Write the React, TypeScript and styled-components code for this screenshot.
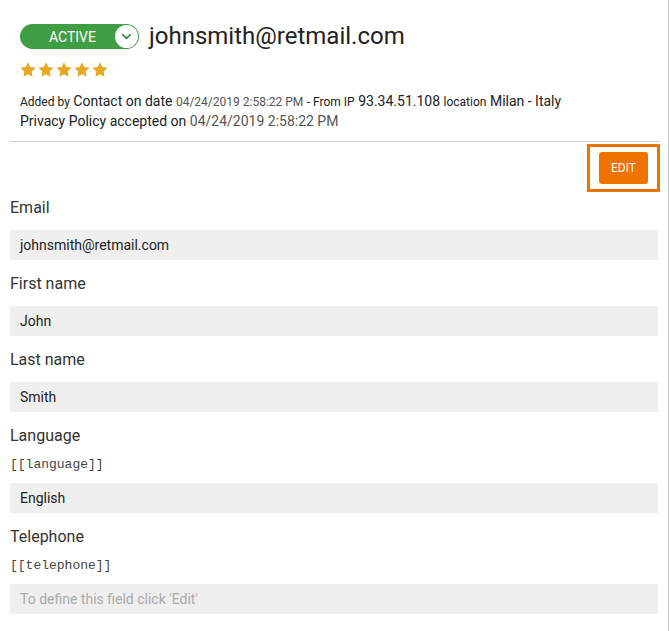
import { type FC } from "react";
import styled, { createGlobalStyle } from "styled-components";
import { ChevronDown } from "lucide-react";

const GlobalStyle = createGlobalStyle`
  html, body {
    margin: 0;
    padding: 0;
    background: #ffffff;
  }
  body {
    font-family: Roboto, "Liberation Sans", Arial, sans-serif;
    color: #222;
  }
`;

const StyledPage = styled.div`
  box-sizing: border-box;
  width: 669px;
  min-height: 631px;
  padding: 0 10px 20px 10px;
  border-right: 1px solid #cccccc;
`;

const StyledHeader = styled.div`
  padding: 24px 0 0 10px;
`;

const StyledTitleRow = styled.div`
  display: flex;
  align-items: center;
  gap: 10px;
`;

const StyledBadge = styled.div`
  box-sizing: border-box;
  display: flex;
  align-items: center;
  justify-content: space-between;
  width: 119px;
  height: 25px;
  padding: 0 1px 0 0;
  border-radius: 13px;
  background: #3f9e44;
  color: #ffffff;
  font-size: 14px;
  text-transform: uppercase;

  & > span {
    flex: 1;
    text-align: center;
    padding-left: 10px;
  }
`;

const StyledBadgeKnob = styled.div`
  display: flex;
  align-items: center;
  justify-content: center;
  width: 23px;
  height: 23px;
  border-radius: 50%;
  background: #ffffff;
  color: #2e8a33;
`;

const StyledTitle = styled.h1`
  margin: 0;
  font-size: 24px;
  font-weight: 400;
  line-height: 25px;
  color: #222;
`;

const StyledStars = styled.div`
  display: flex;
  gap: 2px;
  margin-top: 13px;
`;

const StyledMeta = styled.div`
  margin-top: 14px;
  font-size: 14px;
  line-height: 20px;
  color: #222;
`;

const StyledSmall = styled.span<{ $muted?: boolean }>`
  font-size: 12px;
  line-height: 1;
  color: ${({ $muted }) => ($muted ? "#555" : "#222")};
`;

const StyledMuted = styled.span`
  color: #555;
`;

const StyledDivider = styled.hr`
  margin: 10px -2px 0 0;
  border: 0;
  border-top: 1px solid #cccccc;
`;

const StyledToolbar = styled.div`
  display: flex;
  justify-content: flex-end;
  margin: 2px -2px 0 0;
`;

const StyledHighlight = styled.div`
  padding: 5px 9px;
  border: 3px solid #f07300;
`;

const StyledEditButton = styled.button`
  width: 49px;
  height: 32px;
  border: 0;
  border-radius: 3px;
  background: #f07300;
  color: #ffffff;
  font-family: inherit;
  font-size: 12px;
  cursor: pointer;
`;

const StyledField = styled.div<{ $first?: boolean }>`
  margin-top: ${({ $first }) => ($first ? "6px" : "14px")};
`;

const StyledLabel = styled.div`
  font-size: 16px;
  line-height: 20px;
  color: #333;
  margin-bottom: 12px;
`;

const StyledHint = styled.div`
  margin: -2px 0 10px;
  font-family: "Liberation Mono", "Courier New", monospace;
  font-size: 13px;
  line-height: 17px;
  color: #444;
`;

const StyledValue = styled.div<{ $placeholder?: boolean }>`
  box-sizing: border-box;
  height: 30px;
  padding: 0 10px;
  display: flex;
  align-items: center;
  background: #efefef;
  font-size: 14px;
  color: ${({ $placeholder }) => ($placeholder ? "#aaaaaa" : "#222")};
`;

const Star: FC = () => (
  <svg width="16" height="15" viewBox="0 0 24 23" aria-hidden>
    <path
      d="M12 0.5l3.5 7.3 8 1.1-5.8 5.6 1.4 8L12 18.7l-7.1 3.8 1.4-8L0.5 8.9l8-1.1z"
      fill="#e6a822"
    />
  </svg>
);

interface FieldData {
  label: string;
  hint?: string;
  value?: string;
}

const fields: FieldData[] = [
  { label: "Email", value: "johnsmith@retmail.com" },
  { label: "First name", value: "John" },
  { label: "Last name", value: "Smith" },
  { label: "Language", hint: "[[language]]", value: "English" },
  { label: "Telephone", hint: "[[telephone]]" },
];

const App: FC = () => (
  <>
    <GlobalStyle />
    <StyledPage>
      <StyledHeader>
        <StyledTitleRow>
          <StyledBadge>
            <span>Active</span>
            <StyledBadgeKnob>
              <ChevronDown size={15} strokeWidth={2.5} />
            </StyledBadgeKnob>
          </StyledBadge>
          <StyledTitle>johnsmith@retmail.com</StyledTitle>
        </StyledTitleRow>
        <StyledStars>
          {[0, 1, 2, 3, 4].map((i) => (
            <Star key={i} />
          ))}
        </StyledStars>
        <StyledMeta>
          <div>
            <StyledSmall>Added by</StyledSmall> Contact on date{" "}
            <StyledSmall $muted>04/24/2019 2:58:22 PM</StyledSmall>{" "}
            <StyledSmall>- From IP</StyledSmall> 93.34.51.108{" "}
            <StyledSmall>location</StyledSmall> Milan - Italy
          </div>
          <div>
            Privacy Policy accepted on{" "}
            <StyledMuted>04/24/2019 2:58:22 PM</StyledMuted>
          </div>
        </StyledMeta>
      </StyledHeader>

      <StyledDivider />

      <StyledToolbar>
        <StyledHighlight>
          <StyledEditButton>EDIT</StyledEditButton>
        </StyledHighlight>
      </StyledToolbar>

      {fields.map((field, index) => (
        <StyledField $first={index === 0} key={field.label}>
          <StyledLabel>{field.label}</StyledLabel>
          {field.hint ? <StyledHint>{field.hint}</StyledHint> : null}
          <StyledValue $placeholder={!field.value}>
            {field.value ?? "To define this field click 'Edit'"}
          </StyledValue>
        </StyledField>
      ))}
    </StyledPage>
  </>
);

export default App;
